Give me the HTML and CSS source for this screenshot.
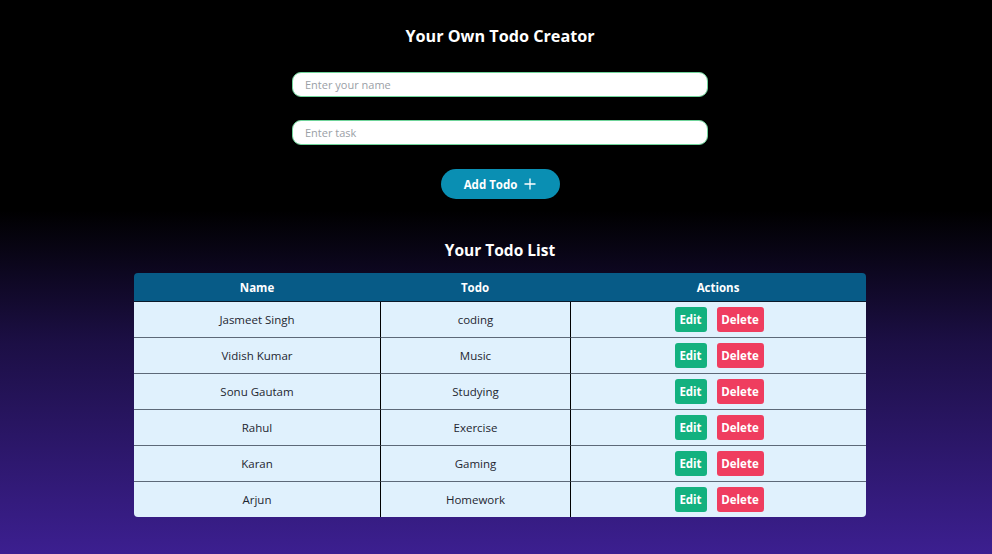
FILE: index.html
```html
<!DOCTYPE html>
<html lang="en">
<head>
<meta charset="utf-8">
<title>Todo Creator</title>
<link rel="stylesheet" href="styles.css">
</head>
<body>
<main class="page">
  <h1 class="title">Your Own Todo Creator</h1>
  <form class="form">
    <input class="field" type="text" placeholder="Enter your name">
    <input class="field" type="text" placeholder="Enter task">
    <button class="add-btn" type="button">Add Todo
      <svg class="plus" viewBox="0 0 12 12" width="12" height="12"><path d="M6 0.5v11M0.5 6h11" stroke="#fff" stroke-width="1.3" fill="none"/></svg>
    </button>
  </form>
  <h2 class="subtitle">Your Todo List</h2>
  <table class="todo-table">
    <thead>
      <tr><th class="c-name">Name</th><th class="c-todo">Todo</th><th>Actions</th></tr>
    </thead>
    <tbody>
      <tr><td>Jasmeet Singh</td><td>coding</td><td><div class="actions"><button class="btn edit">Edit</button><button class="btn del">Delete</button></div></td></tr>
      <tr><td>Vidish Kumar</td><td>Music</td><td><div class="actions"><button class="btn edit">Edit</button><button class="btn del">Delete</button></div></td></tr>
      <tr><td>Sonu Gautam</td><td>Studying</td><td><div class="actions"><button class="btn edit">Edit</button><button class="btn del">Delete</button></div></td></tr>
      <tr><td>Rahul</td><td>Exercise</td><td><div class="actions"><button class="btn edit">Edit</button><button class="btn del">Delete</button></div></td></tr>
      <tr><td>Karan</td><td>Gaming</td><td><div class="actions"><button class="btn edit">Edit</button><button class="btn del">Delete</button></div></td></tr>
      <tr class="last"><td>Arjun</td><td>Homework</td><td><div class="actions"><button class="btn edit">Edit</button><button class="btn del">Delete</button></div></td></tr>
    </tbody>
  </table>
</main>
</body>
</html>
```
FILE: styles.css
```css
* { box-sizing: border-box; }
html, body { margin: 0; height: 100%; }
body {
  background: linear-gradient(to bottom, #000 0%, #000 38%, #1c0f45 62%, #3c1f90 100%);
  font-family: "Open Sans", "Noto Sans", sans-serif;
  color: #fff;
  min-height: 554px;
}
.page {
  padding: 25px 0 0 8px;
  display: flex;
  flex-direction: column;
  align-items: center;
}
.title {
  margin: 0;
  font-size: 16.2px;
  font-weight: 700;
  line-height: 22px;
}
.form {
  margin-top: 25px;
  display: flex;
  flex-direction: column;
  align-items: center;
  gap: 23px;
}
.field {
  width: 416px;
  height: 25px;
  border-radius: 9px;
  border: 1px solid #6fd49a;
  background: #fff;
  padding: 0 12px;
  font-family: inherit;
  font-size: 11px;
  outline: none;
}
.field::placeholder { color: #9aa0a6; }
.add-btn {
  margin-top: 1px;
  width: 119px;
  height: 30px;
  border: none;
  border-radius: 15px;
  background: #0a8fb3;
  color: #fff;
  font-family: inherit;
  font-weight: 700;
  font-size: 11.5px;
  display: flex;
  align-items: center;
  justify-content: center;
  gap: 7px;
  padding: 0;
}
.subtitle {
  margin: 40px 0 0;
  font-size: 15.5px;
  font-weight: 700;
  line-height: 22px;
}
.todo-table {
  margin-top: 12px;
  width: 732px;
  border-collapse: separate;
  border-spacing: 0;
  border-radius: 4px;
  overflow: hidden;
  font-size: 11.5px;
}
.todo-table th {
  background: #075b87;
  color: #fff;
  font-weight: 700;
  height: 29px;
  padding: 0;
  border-bottom: 1px solid #0a1a2a;
}
.c-name { width: 246px; }
.c-todo { width: 190px; }
.todo-table td {
  background: #e0f1fd;
  color: #1e2630;
  text-align: center;
  height: 36px;
  padding: 0;
  border-bottom: 1px solid #5d6978;
}
.todo-table td + td { border-left: 1px solid #000; }
.todo-table tr.last td { border-bottom: none; height: 35px; }
.actions {
  display: flex;
  justify-content: center;
  gap: 10px;
  padding-left: 1px;
}
.btn {
  height: 25px;
  border: none;
  border-radius: 3px;
  color: #fff;
  font-family: inherit;
  font-weight: 700;
  font-size: 11.5px;
  padding: 0;
}
.edit { width: 32px; background: #13b17f; }
.del { width: 47px; background: #ef3d5f; }
```
